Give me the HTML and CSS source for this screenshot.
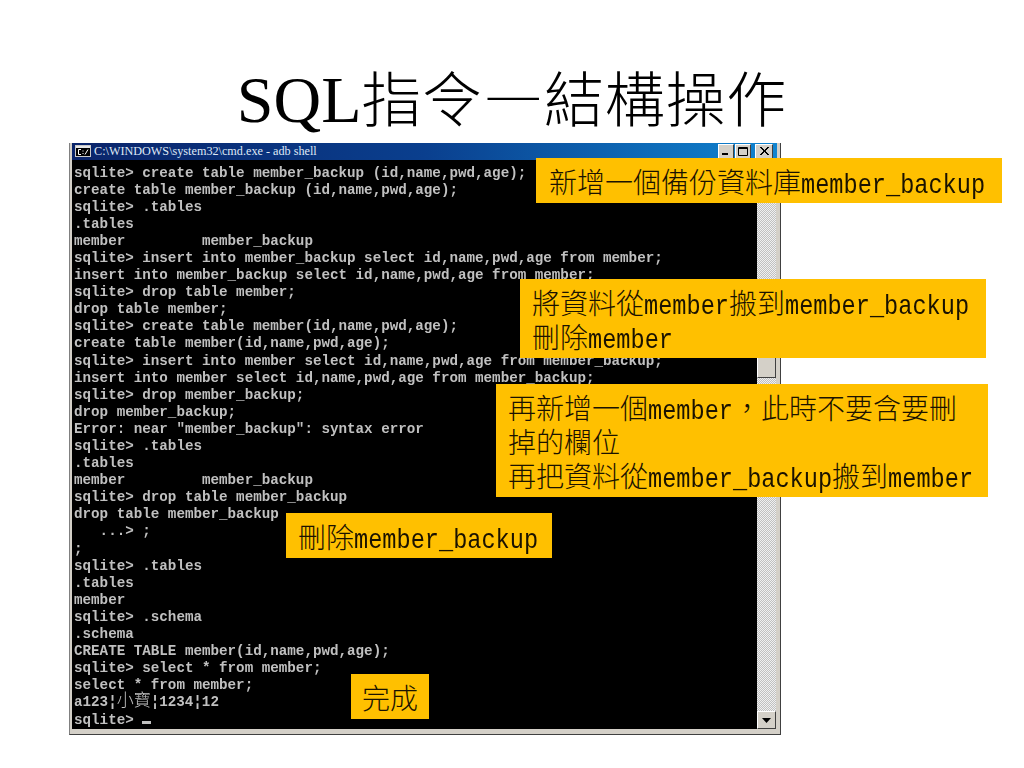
FILE: index.html
```html
<!DOCTYPE html>
<html lang="zh-Hant">
<head>
<meta charset="utf-8">
<title>SQL指令—結構操作</title>
<link rel="stylesheet" href="styles.css">
</head>
<body>
<main class="slide">
  <h1 class="title"><span class="title-latin">SQL</span>指令—結構操作</h1>
  <section class="window">
    <header class="titlebar">
      <svg class="cmd-icon" width="16" height="12" viewBox="0 0 16 12"><rect x="0.5" y="0.5" width="15" height="11" fill="#000" stroke="#c8c8c8"/><rect x="1" y="1" width="14" height="2" fill="#e8e8e8"/><path d="M6 4.5H3.5V9.5H6M8 5.5V6.5M8 8V9M13 4.5L10 9.5" fill="none" stroke="#fff"/></svg>
      <span class="titlebar-text">C:\WINDOWS\system32\cmd.exe - adb shell</span>
      <div class="controls">
        <span class="ctl"><svg width="10" height="10" viewBox="0 0 10 10"><rect x="1" y="7" width="6" height="2" fill="#000"/></svg></span>
        <span class="ctl"><svg width="10" height="10" viewBox="0 0 10 10"><path d="M0.5 1.5H9.5V9.5H0.5ZM0.5 2.5H9.5" fill="none" stroke="#000"/></svg></span>
        <span class="ctl ctl-close"><svg width="10" height="10" viewBox="0 0 10 10"><path d="M1 1L9 9M2 1L10 9M9 1L1 9M10 1L2 9" fill="none" stroke="#000"/></svg></span>
      </div>
    </header>
    <div class="console">
<pre class="terminal">sqlite&gt; create table member_backup (id,name,pwd,age);
create table member_backup (id,name,pwd,age);
sqlite&gt; .tables
.tables
member         member_backup
sqlite&gt; insert into member_backup select id,name,pwd,age from member;
insert into member_backup select id,name,pwd,age from member;
sqlite&gt; drop table member;
drop table member;
sqlite&gt; create table member(id,name,pwd,age);
create table member(id,name,pwd,age);
sqlite&gt; insert into member select id,name,pwd,age from member_backup;
insert into member select id,name,pwd,age from member_backup;
sqlite&gt; drop member_backup;
drop member_backup;
Error: near "member_backup": syntax error
sqlite&gt; .tables
.tables
member         member_backup
sqlite&gt; drop table member_backup
drop table member_backup
   ...&gt; ;
;
sqlite&gt; .tables
.tables
member
sqlite&gt; .schema
.schema
CREATE TABLE member(id,name,pwd,age);
sqlite&gt; select * from member;
select * from member;
a123¦<span class="term-cjk">小寶</span>¦1234¦12
sqlite&gt; <span class="cursor"></span></pre>
      <div class="scrollbar">
        <div class="thumb"></div>
        <div class="track"></div>
        <div class="arrow"><svg width="9" height="5" viewBox="0 0 9 5"><path d="M0 0H9L4.5 5Z" fill="#000"/></svg></div>
      </div>
    </div>
  </section>

  <aside class="note note-a">新增一個備份資料庫<span class="lat">member_backup</span></aside>
  <aside class="note note-b">將資料從<span class="lat">member</span>搬到<span class="lat">member_backup</span><br>刪除<span class="lat">member</span></aside>
  <aside class="note note-c">再新增一個<span class="lat">member</span>，此時不要含要刪<br>掉的欄位<br>再把資料從<span class="lat">member_backup</span>搬到<span class="lat">member</span></aside>
  <aside class="note note-d">刪除<span class="lat">member_backup</span></aside>
  <aside class="note note-e">完成</aside>
</main>
</body>
</html>
```

FILE: styles.css
```css
* { box-sizing: border-box; }
html, body { margin: 0; padding: 0; background: #fff; }

.slide {
  position: relative;
  width: 1024px;
  height: 768px;
  overflow: hidden;
  background: #fff;
}

.title {
  margin: 0;
  height: 143px;
  padding-top: 53px;
  text-align: center;
  font-family: "Noto Sans CJK TC", sans-serif;
  font-size: 60px;
  font-weight: 300;
  line-height: 86px;
  letter-spacing: 0.8px;
  color: #000;
  white-space: nowrap;
}
.title-latin {
  font-family: "Liberation Serif", serif;
  font-size: 66px;
  line-height: 0;
  letter-spacing: 0;
}

.window {
  width: 712px;
  height: 592px;
  margin-left: 69px;
  background: #d4d0c8;
  border: 1px solid #808080;
  border-top: 0;
  border-right-color: #404040;
  border-bottom-color: #404040;
  padding: 0 4px 5px 2px;
}

.titlebar {
  display: flex;
  align-items: center;
  height: 17px;
  margin: 0 -1px 0 0;
  padding: 0 4px 1px 3px;
  background: linear-gradient(90deg, #0a246a 0%, #0a3f8e 50%, #1084d0 100%);
  color: #dfe8f5;
}
.cmd-icon { flex: none; }
.titlebar-text {
  margin-left: 3px;
  font-family: "Liberation Serif", serif;
  font-size: 12.2px;
  white-space: nowrap;
}
.controls { display: flex; margin-left: auto; gap: 1px; }
.ctl {
  display: flex;
  align-items: center;
  justify-content: center;
  width: 16px;
  height: 15px;
  background: #d4d0c8;
  border: 1px solid;
  border-color: #fff #404040 #404040 #fff;
}
.ctl-close { margin-left: 3px; width: 18px; }

.console {
  display: flex;
  height: 569px;
  background: #000;
}
.terminal {
  flex: 1;
  margin: 0;
  padding: 4.5px 0 0 2px;
  font-family: "Liberation Mono", monospace;
  font-size: 14.23px;
  font-weight: 700;
  line-height: 17.1px;
  color: #c0c0c0;
  filter: blur(0.4px);
  overflow: hidden;
}
.term-cjk {
  font-family: "Noto Sans CJK TC", sans-serif;
  font-size: 17px;
  font-weight: 300;
  line-height: 0;
}
.cursor {
  display: inline-block;
  width: 9px;
  height: 3px;
  background: #c0c0c0;
}

.scrollbar {
  flex: none;
  width: 19px;
  display: flex;
  flex-direction: column;
  background: repeating-conic-gradient(#f0f0f0 0 25%, #c0c0c0 0 50%) 0 0 / 2px 2px;
}
.thumb {
  height: 88px;
  margin-top: 130px;
  background: #d4d0c8;
  border: 1px solid;
  border-color: #fff #404040 #404040 #fff;
}
.track { flex: 1; }
.arrow {
  display: flex;
  align-items: center;
  justify-content: center;
  height: 18px;
  background: #d4d0c8;
  border: 1px solid;
  border-color: #fff #404040 #404040 #fff;
}

.note {
  position: absolute;
  background: #ffc000;
  color: #1a1200;
  font-family: "Noto Sans CJK TC", sans-serif;
  font-size: 28px;
  font-weight: 300;
  line-height: 34px;
  padding: 6px 0 5px 12px;
  white-space: nowrap;
}
.note-a { left: 536px; top: 158px; width: 466px; padding-left: 13px; }
.note-b { left: 520px; top: 279px; width: 466px; }
.note-c { left: 496px; top: 384px; width: 492px; }
.note-d { left: 286px; top: 513px; width: 266px; }
.note-e { left: 351px; top: 674px; width: 78px; padding-left: 11px; }

.lat {
  display: inline-block;
  font-family: "Liberation Mono", monospace;
  font-size: 23.6px;
  line-height: 0;
  transform: scaleY(1.2);
  transform-origin: left 6.3px;
}
```
